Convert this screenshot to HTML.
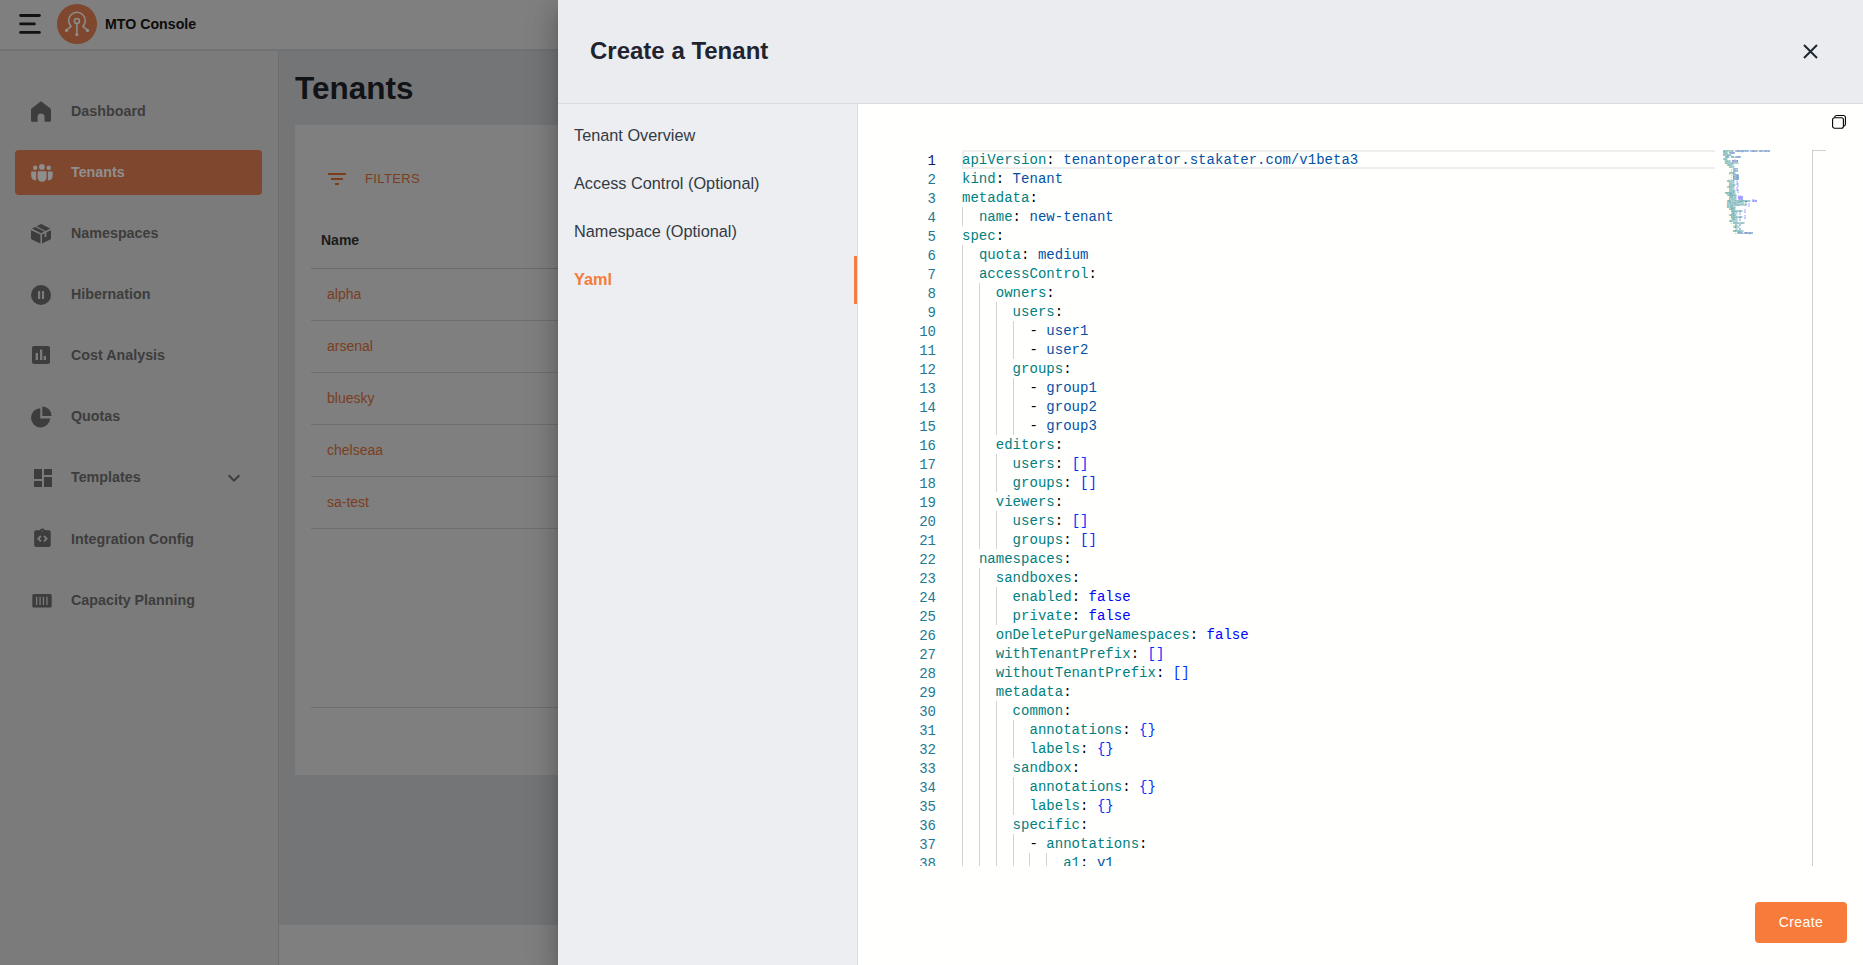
<!DOCTYPE html>
<html><head><meta charset="utf-8"><style>
*{margin:0;padding:0;box-sizing:border-box}
html,body{width:1863px;height:965px;overflow:hidden;background:#747577;font-family:"Liberation Sans",sans-serif}
.abs{position:absolute}
#topbar{position:absolute;left:0;top:0;width:1863px;height:51px;background:#7f7f7f;border-bottom:2px solid #707173;z-index:2}
#side{position:absolute;left:0;top:50px;width:279px;height:915px;background:#7b7b7b;border-right:1px solid #6e6e6e}
.stx{position:absolute;left:71px;height:20px;line-height:20px;font-size:14.3px;font-weight:bold;color:#3d3d3d;margin-top:-50px}
.sact{color:#909090}
#active{position:absolute;left:15px;top:100px;width:247px;height:45px;background:#7f472e;border-radius:4px}
#h1{position:absolute;left:295px;top:68px;font-size:31.5px;font-weight:bold;color:#111317;line-height:40px}
#card{position:absolute;left:295px;top:125px;width:300px;height:650px;background:#7f7f7f}
#footer{position:absolute;left:279px;top:925px;width:300px;height:40px;background:#7f7f7f}
.rtx{position:absolute;left:327px;line-height:20px;font-size:14px;color:#7a3e1e}
.rline{position:absolute;left:311px;width:260px;height:1px;background:#6f6f6f}
#drawer{position:absolute;z-index:5;left:558px;top:0;width:1305px;height:965px;background:#fffffe;box-shadow:0 8px 10px -5px rgba(0,0,0,.2),0 16px 24px 2px rgba(0,0,0,.14),0 6px 30px 5px rgba(0,0,0,.12)}
#dhead{position:absolute;left:0;top:0;width:1305px;height:104px;background:#ebecef;border-bottom:1px solid #dcdcdc}
#dtitle{position:absolute;left:32px;top:36px;font-size:24px;font-weight:bold;color:#1f2430;line-height:30px}
#dnav{position:absolute;left:0;top:104px;width:300px;height:861px;background:#eceef1;border-right:1px solid #dcdcdc}
.nv{position:absolute;left:16px;font-size:16.3px;line-height:20px;color:#343a44}
.nact{color:#f47c3c;font-weight:bold}
#nbar{position:absolute;left:296px;top:152px;width:3px;height:48px;background:#f47c3c}
#editor{position:absolute;z-index:6;left:900px;top:150px;width:926px;height:716px;overflow:hidden;background:#fffffe}
.num{position:absolute;left:0;margin-top:2px;width:36px;text-align:right;font-family:"Liberation Mono",monospace;font-size:14px;line-height:19px;color:#237893}
.act{color:#0b216f}
#code{position:absolute;left:62px;top:0;width:800px;height:716px}
.ln{position:absolute;left:0;margin-top:1px;white-space:pre;font-family:"Liberation Mono",monospace;font-size:14px;line-height:19px;color:#000;letter-spacing:0.03px}
.t{color:#008080} .v{color:#0451a5} .k{color:#0000ff} .b{color:#0431fa} .d{color:#000}
.g{position:absolute;width:1px;height:19px;background:#d3d3d3}
#curline{position:absolute;left:62px;top:0;width:800px;height:19px;border:2px solid #eeeeee}
#mmbg{position:absolute;left:815px;top:0;width:97px;height:716px;background:#fffffe}
#mm{position:absolute;left:823px;top:0;width:80px;height:90px}
#mm .mml{position:absolute;left:0;white-space:pre;font-family:"Liberation Mono",monospace;font-weight:bold;font-size:3.334px;line-height:2px;height:2px;color:#000;transform:scaleX(.5);transform-origin:0 0}
.mmt{background:#008080} .mmv{background:#0451a5} .mmk{background:#0000ff} .mmb{background:#333} .mmd{background:#000}
#ovr{position:absolute;left:912px;top:0;width:14px;height:716px;border-left:1px solid #d0d0d0;border-top:1px solid #d0d0d0}
#btn{position:absolute;z-index:6;left:1197px;top:902px;width:92px;height:41px;background:#f77c3b;border-radius:4px;color:#fff;font-size:14px;letter-spacing:.4px;line-height:40px;text-align:center}
</style></head><body>
<div id="topbar">
 <svg class="abs" style="left:19px;top:14px;width:23px;height:21px" viewBox="0 0 23 21"><rect x="0.2" y="0.1" width="21.6" height="2.8" rx="1.4" fill="#111"/><rect x="0.2" y="8.5" width="16.6" height="2.8" rx="1.4" fill="#111"/><rect x="0.2" y="17" width="21.6" height="2.8" rx="1.4" fill="#111"/></svg>
 <svg class="abs" style="left:57px;top:4px;width:40px;height:40px" viewBox="0 0 40 40"><circle cx="20" cy="20" r="20" fill="#7f472e"/><g fill="none" stroke="#8f8f8f" stroke-width="1.5"><path d="M9.6 26.3 L14 22.4 A8.3 8.3 0 1 1 25.9 22.4 L30.4 26.3"/><circle cx="19.9" cy="16.9" r="2.5"/><path d="M19.9 19.4 V30.4"/></g><g fill="#8f8f8f"><circle cx="9.5" cy="26.4" r="1.6"/><circle cx="30.5" cy="26.4" r="1.6"/><circle cx="19.9" cy="30.6" r="1.6"/></g></svg>
 <div class="abs" style="left:105px;top:14px;font-size:14.2px;font-weight:bold;line-height:20px;color:#0c0c0c">MTO Console</div>
</div>
<div id="side">
 <div id="active"></div>
 <div class="stx" style="top:101px">Dashboard</div><div class="stx sact" style="top:162px">Tenants</div><div class="stx" style="top:223px">Namespaces</div><div class="stx" style="top:284px">Hibernation</div><div class="stx" style="top:345px">Cost Analysis</div><div class="stx" style="top:406px">Quotas</div><div class="stx" style="top:467px">Templates</div><div class="stx" style="top:529px">Integration Config</div><div class="stx" style="top:590px">Capacity Planning</div><svg style="position:absolute;left:0;top:-50px;width:279px;height:965px" viewBox="0 0 279 965">
<path fill="#3d3d3d" d="M41 101.3 L50.2 108.3 Q51 109 51 110 V120.6 Q51 121.8 49.8 121.8 H44.6 V117 A3.5 3.5 0 0 0 37.6 117 V121.8 H32.2 Q31 121.8 31 120.6 V110 Q31 109 31.8 108.3 Z"/>
<g fill="#8e8e8e"><circle cx="35.2" cy="167.7" r="2.2"/><circle cx="41.9" cy="166.9" r="2.9"/><circle cx="48.75" cy="167.7" r="2.2"/>
<path d="M38.4 171.3 H45.7 Q46.5 171.3 46.5 172.1 V177.3 A4.45 4.5 0 0 1 37.6 177.3 V172.1 Q37.6 171.3 38.4 171.3Z"/>
<path d="M31.9 171.5 H36.1 V180.5 Q31.2 180.3 31.2 175.8 V172.2 Q31.2 171.5 31.9 171.5Z"/>
<path d="M52 171.5 H47.9 V180.5 Q52.7 180.3 52.7 175.8 V172.2 Q52.7 171.5 52 171.5Z"/></g>
<g fill="#3d3d3d">
<path d="M41.2 224 L50.2 228.6 L45.8 230.9 L36.6 226.3Z"/>
<path d="M35.2 227 L44.3 231.6 L41.2 233.2 L32 228.6Z"/>
<path d="M31 230.2 L40.4 234.6 V243.6 L31.8 239.5 Q31 239.1 31 238.2Z"/>
<path d="M42 234.6 L44.6 233.4 V237 H46.4 V232.5 L51 230.2 V238.2 Q51 239.1 50.2 239.5 L42 243.6Z"/>
<circle cx="41" cy="295" r="10"/>
<path d="M32 348 Q32 346 34 346 H48 Q50 346 50 348 V362 Q50 364 48 364 H34 Q32 364 32 362Z M35.6 353 V360 H38 V353Z M40 349.6 V360 H42.3 V349.6Z M43.6 356 V360 H46 V356Z" fill-rule="evenodd"/>
<path d="M40.3 408.2 A9.6 9.6 0 1 0 50.2 418.6 H40.3Z"/>
<path d="M42.3 406.6 A9.3 9.3 0 0 1 51.6 415.9 H42.3Z"/>
<path d="M34 469 H42 V479 H34Z M34 481 H42 V487 H34Z M44 487 H52 V477 H44Z M44 469 V475 H52 V469Z"/>
<path transform="translate(31.4,527.6) scale(0.92)" d="M19 3h-4.18C14.4 1.84 13.3 1 12 1c-1.3 0-2.4.84-2.82 2H5c-1.1 0-2 .9-2 2v14c0 1.1.9 2 2 2h14c1.1 0 2-.9 2-2V5c0-1.1-.9-2-2-2zm-8 11.17-1.41 1.42L6 12l3.59-3.59L11 9.83 8.83 12 11 14.17zm1-9.92c-.41 0-.75-.34-.75-.75s.34-.75.75-.75.75.34.75.75-.34.75-.75.75zm2.41 11.34L13 14.17 15.17 12 13 9.83l1.41-1.42L18 12l-3.59 3.59z"/>
<path d="M33.8 594 H50.2 Q51.7 594 51.7 595.5 V606 Q51.7 607.5 50.2 607.5 H33.8 Q32.3 607.5 32.3 606 V595.5 Q32.3 594 33.8 594Z M36 596.7 V605 H37.3 V596.7Z M39.4 596.7 V605 H40.7 V596.7Z M42.8 596.7 V605 H44.1 V596.7Z M46.3 596.7 V605 H47.6 V596.7Z" fill-rule="evenodd"/>
<path d="M238.59 474.59 L234 479.17 L229.41 474.59 L228 476 L234 482 L240 476Z"/>
</g>
<g fill="#7b7b7b"><rect x="38" y="291" width="2.2" height="8"/><rect x="41.9" y="291" width="2.2" height="8"/></g>
</svg>
</div>
<div id="h1">Tenants</div>
<div id="card">
 <svg class="abs" style="left:33px;top:48px;width:18px;height:12px" viewBox="0 0 18 12"><rect x="0" y="0" width="18" height="2" fill="#7a3e1e"/><rect x="3" y="5" width="12" height="2" fill="#7a3e1e"/><rect x="7" y="10" width="4" height="2" fill="#7a3e1e"/></svg>
 <div class="abs" style="left:70px;top:44px;font-size:13px;line-height:20px;color:#7a3e1e;letter-spacing:.37px">FILTERS</div>
 <div class="abs" style="left:26px;top:105px;font-size:14px;font-weight:bold;line-height:20px;color:#1b1b1b">Name</div>
 <div class="abs" style="left:16px;top:143px;width:260px;height:1px;background:#6a6a6a"></div>
 <div class="abs" style="left:16px;top:582px;width:260px;height:1px;background:#6e6e6e"></div>
</div>
<div class="rtx" style="top:284px">alpha</div><div class="rline" style="top:320px"></div><div class="rtx" style="top:336px">arsenal</div><div class="rline" style="top:372px"></div><div class="rtx" style="top:388px">bluesky</div><div class="rline" style="top:424px"></div><div class="rtx" style="top:440px">chelseaa</div><div class="rline" style="top:476px"></div><div class="rtx" style="top:492px">sa-test</div><div class="rline" style="top:528px"></div>
<div id="footer"></div>
<div id="drawer">
 <div id="dhead"><div id="dtitle">Create a Tenant</div>
  <svg class="abs" style="left:1245px;top:44px;width:15px;height:15px" viewBox="0 0 15 15"><path d="M1 1 L14 14 M14 1 L1 14" stroke="#1f2733" stroke-width="2"/></svg>
 </div>
 <div id="dnav">
  <div class="nv" style="top:21px">Tenant Overview</div>
  <div class="nv" style="top:69px">Access Control (Optional)</div>
  <div class="nv" style="top:117px">Namespace (Optional)</div>
  <div class="nv nact" style="top:165px">Yaml</div>
  <div id="nbar"></div>
 </div>
 <svg class="abs" style="left:1273px;top:113px;width:17px;height:17px" viewBox="0 0 17 17"><path d="M3.4 4.6 Q3.6 2.5 5.6 2.5 H12.4 Q14.4 2.5 14.4 4.5 V11.2 Q14.4 13 12.4 13.2" fill="none" stroke="#000" stroke-width="1.1"/><rect x="1.6" y="4.7" width="10.8" height="10.6" rx="2" fill="#fffffe" stroke="#000" stroke-width="1.1"/></svg>
</div>
<div id="editor">
 <div class="num act" style="top:0px">1</div><div class="num" style="top:19px">2</div><div class="num" style="top:38px">3</div><div class="num" style="top:57px">4</div><div class="num" style="top:76px">5</div><div class="num" style="top:95px">6</div><div class="num" style="top:114px">7</div><div class="num" style="top:133px">8</div><div class="num" style="top:152px">9</div><div class="num" style="top:171px">10</div><div class="num" style="top:190px">11</div><div class="num" style="top:209px">12</div><div class="num" style="top:228px">13</div><div class="num" style="top:247px">14</div><div class="num" style="top:266px">15</div><div class="num" style="top:285px">16</div><div class="num" style="top:304px">17</div><div class="num" style="top:323px">18</div><div class="num" style="top:342px">19</div><div class="num" style="top:361px">20</div><div class="num" style="top:380px">21</div><div class="num" style="top:399px">22</div><div class="num" style="top:418px">23</div><div class="num" style="top:437px">24</div><div class="num" style="top:456px">25</div><div class="num" style="top:475px">26</div><div class="num" style="top:494px">27</div><div class="num" style="top:513px">28</div><div class="num" style="top:532px">29</div><div class="num" style="top:551px">30</div><div class="num" style="top:570px">31</div><div class="num" style="top:589px">32</div><div class="num" style="top:608px">33</div><div class="num" style="top:627px">34</div><div class="num" style="top:646px">35</div><div class="num" style="top:665px">36</div><div class="num" style="top:684px">37</div><div class="num" style="top:703px">38</div>
 <div id="curline"></div>
 <div id="code"><div class="g" style="top:57px;left:0.00px"></div><div class="g" style="top:95px;left:0.00px"></div><div class="g" style="top:114px;left:0.00px"></div><div class="g" style="top:133px;left:0.00px"></div><div class="g" style="top:133px;left:16.86px"></div><div class="g" style="top:152px;left:0.00px"></div><div class="g" style="top:152px;left:16.86px"></div><div class="g" style="top:152px;left:33.72px"></div><div class="g" style="top:171px;left:0.00px"></div><div class="g" style="top:171px;left:16.86px"></div><div class="g" style="top:171px;left:33.72px"></div><div class="g" style="top:171px;left:50.58px"></div><div class="g" style="top:190px;left:0.00px"></div><div class="g" style="top:190px;left:16.86px"></div><div class="g" style="top:190px;left:33.72px"></div><div class="g" style="top:190px;left:50.58px"></div><div class="g" style="top:209px;left:0.00px"></div><div class="g" style="top:209px;left:16.86px"></div><div class="g" style="top:209px;left:33.72px"></div><div class="g" style="top:228px;left:0.00px"></div><div class="g" style="top:228px;left:16.86px"></div><div class="g" style="top:228px;left:33.72px"></div><div class="g" style="top:228px;left:50.58px"></div><div class="g" style="top:247px;left:0.00px"></div><div class="g" style="top:247px;left:16.86px"></div><div class="g" style="top:247px;left:33.72px"></div><div class="g" style="top:247px;left:50.58px"></div><div class="g" style="top:266px;left:0.00px"></div><div class="g" style="top:266px;left:16.86px"></div><div class="g" style="top:266px;left:33.72px"></div><div class="g" style="top:266px;left:50.58px"></div><div class="g" style="top:285px;left:0.00px"></div><div class="g" style="top:285px;left:16.86px"></div><div class="g" style="top:304px;left:0.00px"></div><div class="g" style="top:304px;left:16.86px"></div><div class="g" style="top:304px;left:33.72px"></div><div class="g" style="top:323px;left:0.00px"></div><div class="g" style="top:323px;left:16.86px"></div><div class="g" style="top:323px;left:33.72px"></div><div class="g" style="top:342px;left:0.00px"></div><div class="g" style="top:342px;left:16.86px"></div><div class="g" style="top:361px;left:0.00px"></div><div class="g" style="top:361px;left:16.86px"></div><div class="g" style="top:361px;left:33.72px"></div><div class="g" style="top:380px;left:0.00px"></div><div class="g" style="top:380px;left:16.86px"></div><div class="g" style="top:380px;left:33.72px"></div><div class="g" style="top:399px;left:0.00px"></div><div class="g" style="top:418px;left:0.00px"></div><div class="g" style="top:418px;left:16.86px"></div><div class="g" style="top:437px;left:0.00px"></div><div class="g" style="top:437px;left:16.86px"></div><div class="g" style="top:437px;left:33.72px"></div><div class="g" style="top:456px;left:0.00px"></div><div class="g" style="top:456px;left:16.86px"></div><div class="g" style="top:456px;left:33.72px"></div><div class="g" style="top:475px;left:0.00px"></div><div class="g" style="top:475px;left:16.86px"></div><div class="g" style="top:494px;left:0.00px"></div><div class="g" style="top:494px;left:16.86px"></div><div class="g" style="top:513px;left:0.00px"></div><div class="g" style="top:513px;left:16.86px"></div><div class="g" style="top:532px;left:0.00px"></div><div class="g" style="top:532px;left:16.86px"></div><div class="g" style="top:551px;left:0.00px"></div><div class="g" style="top:551px;left:16.86px"></div><div class="g" style="top:551px;left:33.72px"></div><div class="g" style="top:570px;left:0.00px"></div><div class="g" style="top:570px;left:16.86px"></div><div class="g" style="top:570px;left:33.72px"></div><div class="g" style="top:570px;left:50.58px"></div><div class="g" style="top:589px;left:0.00px"></div><div class="g" style="top:589px;left:16.86px"></div><div class="g" style="top:589px;left:33.72px"></div><div class="g" style="top:589px;left:50.58px"></div><div class="g" style="top:608px;left:0.00px"></div><div class="g" style="top:608px;left:16.86px"></div><div class="g" style="top:608px;left:33.72px"></div><div class="g" style="top:627px;left:0.00px"></div><div class="g" style="top:627px;left:16.86px"></div><div class="g" style="top:627px;left:33.72px"></div><div class="g" style="top:627px;left:50.58px"></div><div class="g" style="top:646px;left:0.00px"></div><div class="g" style="top:646px;left:16.86px"></div><div class="g" style="top:646px;left:33.72px"></div><div class="g" style="top:646px;left:50.58px"></div><div class="g" style="top:665px;left:0.00px"></div><div class="g" style="top:665px;left:16.86px"></div><div class="g" style="top:665px;left:33.72px"></div><div class="g" style="top:684px;left:0.00px"></div><div class="g" style="top:684px;left:16.86px"></div><div class="g" style="top:684px;left:33.72px"></div><div class="g" style="top:684px;left:50.58px"></div><div class="g" style="top:703px;left:0.00px"></div><div class="g" style="top:703px;left:16.86px"></div><div class="g" style="top:703px;left:33.72px"></div><div class="g" style="top:703px;left:50.58px"></div><div class="g" style="top:703px;left:67.44px"></div><div class="g" style="top:703px;left:84.30px"></div><div class="ln" style="top:0px"><span class="t">apiVersion</span><span class="d">:</span>&nbsp;<span class="v">tenantoperator.stakater.com/v1beta3</span></div><div class="ln" style="top:19px"><span class="t">kind</span><span class="d">:</span>&nbsp;<span class="v">Tenant</span></div><div class="ln" style="top:38px"><span class="t">metadata</span><span class="d">:</span></div><div class="ln" style="top:57px">&nbsp;&nbsp;<span class="t">name</span><span class="d">:</span>&nbsp;<span class="v">new-tenant</span></div><div class="ln" style="top:76px"><span class="t">spec</span><span class="d">:</span></div><div class="ln" style="top:95px">&nbsp;&nbsp;<span class="t">quota</span><span class="d">:</span>&nbsp;<span class="v">medium</span></div><div class="ln" style="top:114px">&nbsp;&nbsp;<span class="t">accessControl</span><span class="d">:</span></div><div class="ln" style="top:133px">&nbsp;&nbsp;&nbsp;&nbsp;<span class="t">owners</span><span class="d">:</span></div><div class="ln" style="top:152px">&nbsp;&nbsp;&nbsp;&nbsp;&nbsp;&nbsp;<span class="t">users</span><span class="d">:</span></div><div class="ln" style="top:171px">&nbsp;&nbsp;&nbsp;&nbsp;&nbsp;&nbsp;&nbsp;&nbsp;<span class="d">-</span>&nbsp;<span class="v">user1</span></div><div class="ln" style="top:190px">&nbsp;&nbsp;&nbsp;&nbsp;&nbsp;&nbsp;&nbsp;&nbsp;<span class="d">-</span>&nbsp;<span class="v">user2</span></div><div class="ln" style="top:209px">&nbsp;&nbsp;&nbsp;&nbsp;&nbsp;&nbsp;<span class="t">groups</span><span class="d">:</span></div><div class="ln" style="top:228px">&nbsp;&nbsp;&nbsp;&nbsp;&nbsp;&nbsp;&nbsp;&nbsp;<span class="d">-</span>&nbsp;<span class="v">group1</span></div><div class="ln" style="top:247px">&nbsp;&nbsp;&nbsp;&nbsp;&nbsp;&nbsp;&nbsp;&nbsp;<span class="d">-</span>&nbsp;<span class="v">group2</span></div><div class="ln" style="top:266px">&nbsp;&nbsp;&nbsp;&nbsp;&nbsp;&nbsp;&nbsp;&nbsp;<span class="d">-</span>&nbsp;<span class="v">group3</span></div><div class="ln" style="top:285px">&nbsp;&nbsp;&nbsp;&nbsp;<span class="t">editors</span><span class="d">:</span></div><div class="ln" style="top:304px">&nbsp;&nbsp;&nbsp;&nbsp;&nbsp;&nbsp;<span class="t">users</span><span class="d">:</span>&nbsp;<span class="b">[]</span></div><div class="ln" style="top:323px">&nbsp;&nbsp;&nbsp;&nbsp;&nbsp;&nbsp;<span class="t">groups</span><span class="d">:</span>&nbsp;<span class="b">[]</span></div><div class="ln" style="top:342px">&nbsp;&nbsp;&nbsp;&nbsp;<span class="t">viewers</span><span class="d">:</span></div><div class="ln" style="top:361px">&nbsp;&nbsp;&nbsp;&nbsp;&nbsp;&nbsp;<span class="t">users</span><span class="d">:</span>&nbsp;<span class="b">[]</span></div><div class="ln" style="top:380px">&nbsp;&nbsp;&nbsp;&nbsp;&nbsp;&nbsp;<span class="t">groups</span><span class="d">:</span>&nbsp;<span class="b">[]</span></div><div class="ln" style="top:399px">&nbsp;&nbsp;<span class="t">namespaces</span><span class="d">:</span></div><div class="ln" style="top:418px">&nbsp;&nbsp;&nbsp;&nbsp;<span class="t">sandboxes</span><span class="d">:</span></div><div class="ln" style="top:437px">&nbsp;&nbsp;&nbsp;&nbsp;&nbsp;&nbsp;<span class="t">enabled</span><span class="d">:</span>&nbsp;<span class="k">false</span></div><div class="ln" style="top:456px">&nbsp;&nbsp;&nbsp;&nbsp;&nbsp;&nbsp;<span class="t">private</span><span class="d">:</span>&nbsp;<span class="k">false</span></div><div class="ln" style="top:475px">&nbsp;&nbsp;&nbsp;&nbsp;<span class="t">onDeletePurgeNamespaces</span><span class="d">:</span>&nbsp;<span class="k">false</span></div><div class="ln" style="top:494px">&nbsp;&nbsp;&nbsp;&nbsp;<span class="t">withTenantPrefix</span><span class="d">:</span>&nbsp;<span class="b">[]</span></div><div class="ln" style="top:513px">&nbsp;&nbsp;&nbsp;&nbsp;<span class="t">withoutTenantPrefix</span><span class="d">:</span>&nbsp;<span class="b">[]</span></div><div class="ln" style="top:532px">&nbsp;&nbsp;&nbsp;&nbsp;<span class="t">metadata</span><span class="d">:</span></div><div class="ln" style="top:551px">&nbsp;&nbsp;&nbsp;&nbsp;&nbsp;&nbsp;<span class="t">common</span><span class="d">:</span></div><div class="ln" style="top:570px">&nbsp;&nbsp;&nbsp;&nbsp;&nbsp;&nbsp;&nbsp;&nbsp;<span class="t">annotations</span><span class="d">:</span>&nbsp;<span class="b">{}</span></div><div class="ln" style="top:589px">&nbsp;&nbsp;&nbsp;&nbsp;&nbsp;&nbsp;&nbsp;&nbsp;<span class="t">labels</span><span class="d">:</span>&nbsp;<span class="b">{}</span></div><div class="ln" style="top:608px">&nbsp;&nbsp;&nbsp;&nbsp;&nbsp;&nbsp;<span class="t">sandbox</span><span class="d">:</span></div><div class="ln" style="top:627px">&nbsp;&nbsp;&nbsp;&nbsp;&nbsp;&nbsp;&nbsp;&nbsp;<span class="t">annotations</span><span class="d">:</span>&nbsp;<span class="b">{}</span></div><div class="ln" style="top:646px">&nbsp;&nbsp;&nbsp;&nbsp;&nbsp;&nbsp;&nbsp;&nbsp;<span class="t">labels</span><span class="d">:</span>&nbsp;<span class="b">{}</span></div><div class="ln" style="top:665px">&nbsp;&nbsp;&nbsp;&nbsp;&nbsp;&nbsp;<span class="t">specific</span><span class="d">:</span></div><div class="ln" style="top:684px">&nbsp;&nbsp;&nbsp;&nbsp;&nbsp;&nbsp;&nbsp;&nbsp;<span class="d">-</span>&nbsp;<span class="t">annotations</span><span class="d">:</span></div><div class="ln" style="top:703px">&nbsp;&nbsp;&nbsp;&nbsp;&nbsp;&nbsp;&nbsp;&nbsp;&nbsp;&nbsp;&nbsp;&nbsp;<span class="t">a1</span><span class="d">:</span>&nbsp;<span class="v">v1</span></div></div>
 <div id="mmbg"></div><div id="mm"><div class="mml" style="top:0px"><span class="t">apiVersion</span><span class="d">:</span>&nbsp;<span class="v">tenantoperator.stakater.com/v1beta3</span></div><div class="mml" style="top:2px"><span class="t">kind</span><span class="d">:</span>&nbsp;<span class="v">Tenant</span></div><div class="mml" style="top:4px"><span class="t">metadata</span><span class="d">:</span></div><div class="mml" style="top:6px">&nbsp;&nbsp;<span class="t">name</span><span class="d">:</span>&nbsp;<span class="v">new-tenant</span></div><div class="mml" style="top:8px"><span class="t">spec</span><span class="d">:</span></div><div class="mml" style="top:10px">&nbsp;&nbsp;<span class="t">quota</span><span class="d">:</span>&nbsp;<span class="v">medium</span></div><div class="mml" style="top:12px">&nbsp;&nbsp;<span class="t">accessControl</span><span class="d">:</span></div><div class="mml" style="top:14px">&nbsp;&nbsp;&nbsp;&nbsp;<span class="t">owners</span><span class="d">:</span></div><div class="mml" style="top:16px">&nbsp;&nbsp;&nbsp;&nbsp;&nbsp;&nbsp;<span class="t">users</span><span class="d">:</span></div><div class="mml" style="top:18px">&nbsp;&nbsp;&nbsp;&nbsp;&nbsp;&nbsp;&nbsp;&nbsp;<span class="d">-</span>&nbsp;<span class="v">user1</span></div><div class="mml" style="top:20px">&nbsp;&nbsp;&nbsp;&nbsp;&nbsp;&nbsp;&nbsp;&nbsp;<span class="d">-</span>&nbsp;<span class="v">user2</span></div><div class="mml" style="top:22px">&nbsp;&nbsp;&nbsp;&nbsp;&nbsp;&nbsp;<span class="t">groups</span><span class="d">:</span></div><div class="mml" style="top:24px">&nbsp;&nbsp;&nbsp;&nbsp;&nbsp;&nbsp;&nbsp;&nbsp;<span class="d">-</span>&nbsp;<span class="v">group1</span></div><div class="mml" style="top:26px">&nbsp;&nbsp;&nbsp;&nbsp;&nbsp;&nbsp;&nbsp;&nbsp;<span class="d">-</span>&nbsp;<span class="v">group2</span></div><div class="mml" style="top:28px">&nbsp;&nbsp;&nbsp;&nbsp;&nbsp;&nbsp;&nbsp;&nbsp;<span class="d">-</span>&nbsp;<span class="v">group3</span></div><div class="mml" style="top:30px">&nbsp;&nbsp;&nbsp;&nbsp;<span class="t">editors</span><span class="d">:</span></div><div class="mml" style="top:32px">&nbsp;&nbsp;&nbsp;&nbsp;&nbsp;&nbsp;<span class="t">users</span><span class="d">:</span>&nbsp;<span class="b">[]</span></div><div class="mml" style="top:34px">&nbsp;&nbsp;&nbsp;&nbsp;&nbsp;&nbsp;<span class="t">groups</span><span class="d">:</span>&nbsp;<span class="b">[]</span></div><div class="mml" style="top:36px">&nbsp;&nbsp;&nbsp;&nbsp;<span class="t">viewers</span><span class="d">:</span></div><div class="mml" style="top:38px">&nbsp;&nbsp;&nbsp;&nbsp;&nbsp;&nbsp;<span class="t">users</span><span class="d">:</span>&nbsp;<span class="b">[]</span></div><div class="mml" style="top:40px">&nbsp;&nbsp;&nbsp;&nbsp;&nbsp;&nbsp;<span class="t">groups</span><span class="d">:</span>&nbsp;<span class="b">[]</span></div><div class="mml" style="top:42px">&nbsp;&nbsp;<span class="t">namespaces</span><span class="d">:</span></div><div class="mml" style="top:44px">&nbsp;&nbsp;&nbsp;&nbsp;<span class="t">sandboxes</span><span class="d">:</span></div><div class="mml" style="top:46px">&nbsp;&nbsp;&nbsp;&nbsp;&nbsp;&nbsp;<span class="t">enabled</span><span class="d">:</span>&nbsp;<span class="k">false</span></div><div class="mml" style="top:48px">&nbsp;&nbsp;&nbsp;&nbsp;&nbsp;&nbsp;<span class="t">private</span><span class="d">:</span>&nbsp;<span class="k">false</span></div><div class="mml" style="top:50px">&nbsp;&nbsp;&nbsp;&nbsp;<span class="t">onDeletePurgeNamespaces</span><span class="d">:</span>&nbsp;<span class="k">false</span></div><div class="mml" style="top:52px">&nbsp;&nbsp;&nbsp;&nbsp;<span class="t">withTenantPrefix</span><span class="d">:</span>&nbsp;<span class="b">[]</span></div><div class="mml" style="top:54px">&nbsp;&nbsp;&nbsp;&nbsp;<span class="t">withoutTenantPrefix</span><span class="d">:</span>&nbsp;<span class="b">[]</span></div><div class="mml" style="top:56px">&nbsp;&nbsp;&nbsp;&nbsp;<span class="t">metadata</span><span class="d">:</span></div><div class="mml" style="top:58px">&nbsp;&nbsp;&nbsp;&nbsp;&nbsp;&nbsp;<span class="t">common</span><span class="d">:</span></div><div class="mml" style="top:60px">&nbsp;&nbsp;&nbsp;&nbsp;&nbsp;&nbsp;&nbsp;&nbsp;<span class="t">annotations</span><span class="d">:</span>&nbsp;<span class="b">{}</span></div><div class="mml" style="top:62px">&nbsp;&nbsp;&nbsp;&nbsp;&nbsp;&nbsp;&nbsp;&nbsp;<span class="t">labels</span><span class="d">:</span>&nbsp;<span class="b">{}</span></div><div class="mml" style="top:64px">&nbsp;&nbsp;&nbsp;&nbsp;&nbsp;&nbsp;<span class="t">sandbox</span><span class="d">:</span></div><div class="mml" style="top:66px">&nbsp;&nbsp;&nbsp;&nbsp;&nbsp;&nbsp;&nbsp;&nbsp;<span class="t">annotations</span><span class="d">:</span>&nbsp;<span class="b">{}</span></div><div class="mml" style="top:68px">&nbsp;&nbsp;&nbsp;&nbsp;&nbsp;&nbsp;&nbsp;&nbsp;<span class="t">labels</span><span class="d">:</span>&nbsp;<span class="b">{}</span></div><div class="mml" style="top:70px">&nbsp;&nbsp;&nbsp;&nbsp;&nbsp;&nbsp;<span class="t">specific</span><span class="d">:</span></div><div class="mml" style="top:72px">&nbsp;&nbsp;&nbsp;&nbsp;&nbsp;&nbsp;&nbsp;&nbsp;<span class="d">-</span>&nbsp;<span class="t">annotations</span><span class="d">:</span></div><div class="mml" style="top:74px">&nbsp;&nbsp;&nbsp;&nbsp;&nbsp;&nbsp;&nbsp;&nbsp;&nbsp;&nbsp;&nbsp;&nbsp;<span class="t">a1</span><span class="d">:</span>&nbsp;<span class="v">v1</span></div><div class="mml" style="top:76px">&nbsp;&nbsp;&nbsp;&nbsp;&nbsp;&nbsp;&nbsp;&nbsp;&nbsp;&nbsp;<span class="t">labels</span><span class="d">:</span></div><div class="mml" style="top:78px">&nbsp;&nbsp;&nbsp;&nbsp;&nbsp;&nbsp;&nbsp;&nbsp;&nbsp;&nbsp;&nbsp;&nbsp;<span class="t">l1</span><span class="d">:</span>&nbsp;<span class="v">v1</span></div><div class="mml" style="top:80px">&nbsp;&nbsp;&nbsp;&nbsp;&nbsp;&nbsp;&nbsp;&nbsp;&nbsp;&nbsp;<span class="t">namespaces</span><span class="d">:</span></div><div class="mml" style="top:82px">&nbsp;&nbsp;&nbsp;&nbsp;&nbsp;&nbsp;&nbsp;&nbsp;&nbsp;&nbsp;&nbsp;&nbsp;<span class="d">-</span>&nbsp;<span class="v">tenant-namespace</span></div></div>
 <div id="ovr"></div>
</div>
<div id="btn" style="left:1755px">Create</div>
</body></html>
